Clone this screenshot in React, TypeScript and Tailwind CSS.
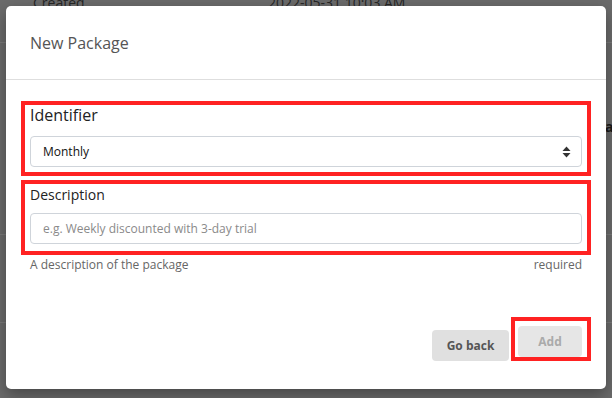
function SortIcon() {
  return (
    <svg width="9" height="12" viewBox="0 0 9 12" fill="#333">
      <path d="M4.5 0.5 L8.5 5 H0.5 Z" />
      <path d="M4.5 11.5 L8.5 7 H0.5 Z" />
    </svg>
  );
}

export default function App() {
  return (
    <div className="relative h-[398px] w-[612px] overflow-hidden bg-[#6b6b6b] font-['Open_Sans',sans-serif]">
      {/* page behind the backdrop */}
      <div className="-mt-[7px] flex h-[50px] border-b border-[#7a7a7a] text-[14px] leading-5 text-[#262626]">
        <div className="w-[268px] pl-[33px]">Created</div>
        <div>2022-05-31 10:03 AM</div>
      </div>
      <div className="h-[192px] border-b border-[#7a7a7a] pl-[605px] pt-[74px] text-[14px] font-bold leading-5 text-[#1a1a1a]">a</div>
      <div className="h-[88px] border-b border-[#7a7a7a]" />

      <div className="absolute left-[6px] top-[6px] flex h-[383px] w-[600px] flex-col rounded-[5px] bg-white shadow-[0_6px_16px_rgba(0,0,0,0.35)]">
        <div className="flex h-[74px] items-center border-b border-[#dedede] px-6">
          <h2 className="text-[16px] text-[#555]">New Package</h2>
        </div>

        <div className="flex flex-1 flex-col px-6 pt-[21px]">
          <div className="-mx-[9px] border-4 border-[#ff2222] px-[5px] pb-[5px]">
            <label className="mb-[10px] block text-[16px] leading-[21px] text-[#222]">Identifier</label>
            <div className="flex h-[31px] items-center justify-between rounded border border-[#cfd4da] pl-[12px] pr-[10px]">
              <span className="text-[12px] text-[#111]">Monthly</span>
              <SortIcon />
            </div>
          </div>

          <div className="-mx-[9px] mt-[4px] border-4 border-[#ff2222] px-[5px] pb-[7px]">
            <label className="mb-[8px] block text-[14px] leading-[21px] text-[#222]">Description</label>
            <div className="flex h-[31px] items-center rounded border border-[#cfd4da] pl-[12px]">
              <span className="text-[12px] text-[#8a8a8a]">e.g. Weekly discounted with 3-day trial</span>
            </div>
          </div>

          <div className="mt-[3px] flex justify-between text-[12px] leading-[14px] text-[#666]">
            <span>A description of the package</span>
            <span>required</span>
          </div>

          <div className="mt-auto mb-[28px] flex items-end justify-end gap-[2px]">
            <button className="h-[31px] w-[77px] rounded bg-[#e0e0e0] text-[12px] font-bold text-[#555]">Go back</button>
            <div className="-mr-[9px] border-4 border-[#ff2222] pl-[3px] pr-[5px] pt-[5px]">
              <button className="h-[31px] w-[64px] rounded bg-[#e6e6e6] text-[12px] font-bold text-[#aaa]">Add</button>
            </div>
          </div>
        </div>
      </div>
    </div>
  );
}
